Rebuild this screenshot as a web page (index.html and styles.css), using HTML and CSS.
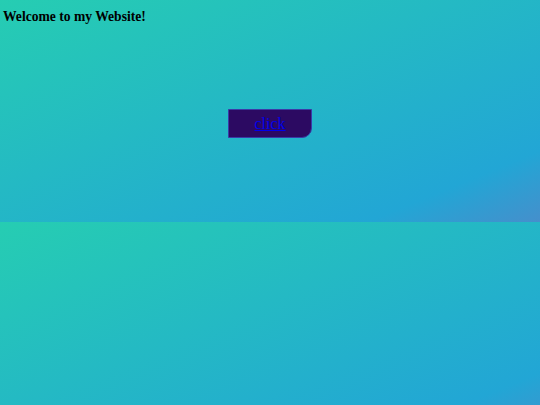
FILE: index.html
```html
<!DOCTYPE html>
<html>
<head>
<meta charset="utf-8">
<link rel="stylesheet" href="styles.css">
</head>
<body>
<h5 class="title">Welcome to my Website!</h5>
<div class="center">
  <div class="btn"><a href="#">click</a></div>
</div>
</body>
</html>
```
FILE: styles.css
```css
html, body {
  margin: 0;
  padding: 0;
}
body {
  height: 405px;
  font-family: "Liberation Serif", serif;
  background: linear-gradient(to bottom right, #26cdb2 0%, #22a6d5 84%, #458fcc 100%);
  background-size: 100% 222px;
  background-repeat: repeat;
}
.title {
  margin: 0;
  padding: 9px 3px 0;
  font-size: 13.6px;
  font-weight: bold;
  color: #000;
  line-height: 15px;
}
.center {
  display: flex;
  justify-content: center;
  padding-top: 85px;
}
.btn {
  width: 82px;
  height: 27px;
  background: #2c0a62;
  border: 1px solid #3a3aa8;
  border-bottom-right-radius: 10px;
  display: flex;
  align-items: center;
  justify-content: center;
}
.btn a {
  color: #0000ee;
  font-size: 16px;
  text-decoration: underline;
}
```
